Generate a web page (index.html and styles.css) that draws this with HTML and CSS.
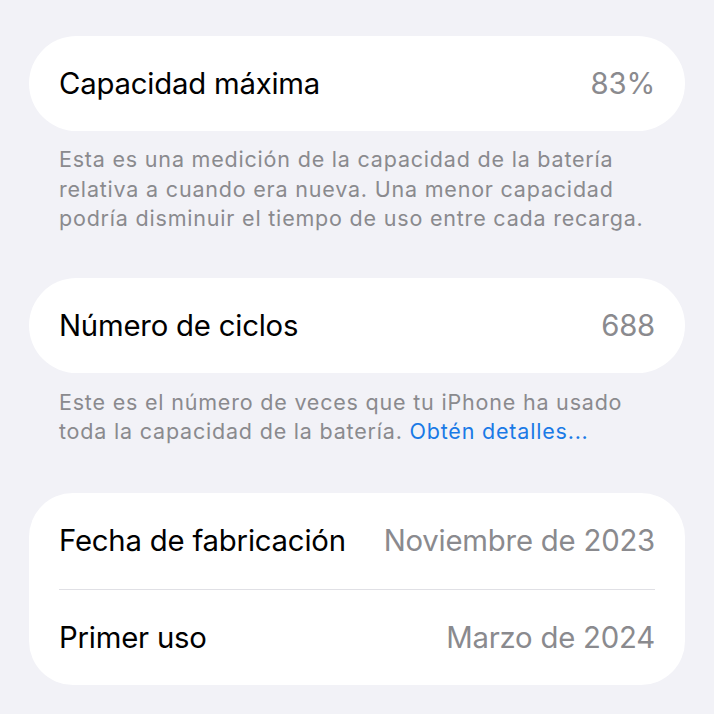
FILE: index.html
```html
<!DOCTYPE html>
<html lang="es">
<head>
    <meta charset="UTF-8">
    <meta name="viewport" content="width=device-width, initial-scale=1.0">
    <title>Salud de la batería</title>
    <link rel="stylesheet" href="styles.css">
</head>
<body>
    <div class="settings">
        <div class="group">
            <div class="row">
                <span class="label">Capacidad máxima</span>
                <span class="value">83%</span>
            </div>
        </div>
        <p class="footnote">
            Esta es una medición de la capacidad de la batería<br>
            relativa a cuando era nueva. Una menor capacidad<br>
            podría disminuir el tiempo de uso entre cada recarga.
        </p>

        <div class="group">
            <div class="row">
                <span class="label">Número de ciclos</span>
                <span class="value">688</span>
            </div>
        </div>
        <p class="footnote footnote-cycles">
            Este es el número de veces que tu iPhone ha usado<br>
            toda la capacidad de la batería. <a href="#" class="link">Obtén detalles...</a>
        </p>

        <div class="group group-list">
            <div class="row">
                <span class="label">Fecha de fabricación</span>
                <span class="value">Noviembre de 2023</span>
            </div>
            <div class="row">
                <span class="label">Primer uso</span>
                <span class="value">Marzo de 2024</span>
            </div>
        </div>
    </div>
</body>
</html>
```

FILE: styles.css
```css
body {
    font-family: Inter, "Liberation Sans", sans-serif;
    background-color: #f2f2f7;
    margin: 0;
    padding: 0;
}
.settings {
    padding: 36px 29px 0;
}
.group {
    background-color: #fff;
    border-radius: 48px;
}
.group-list {
    border-radius: 44px;
}
.row {
    display: flex;
    justify-content: space-between;
    align-items: center;
    height: 95px;
    margin: 0 30px;
    font-size: 29.3px;
    letter-spacing: -0.2px;
    box-sizing: border-box;
}
.group-list .row {
    height: 96px;
}
.group-list .row + .row {
    border-top: 1px solid #e0e0e5;
}
.label {
    color: #000;
}
.value {
    color: #8a8a8e;
}
.footnote {
    margin: 14px 30px 44px;
    font-size: 21.5px;
    line-height: 29.5px;
    letter-spacing: 0.8px;
    white-space: nowrap;
    color: #8a8a8e;
}
.footnote-cycles {
    margin-top: 15px;
    margin-bottom: 46px;
}
.link {
    color: #1a7ae6;
    text-decoration: none;
}
```
